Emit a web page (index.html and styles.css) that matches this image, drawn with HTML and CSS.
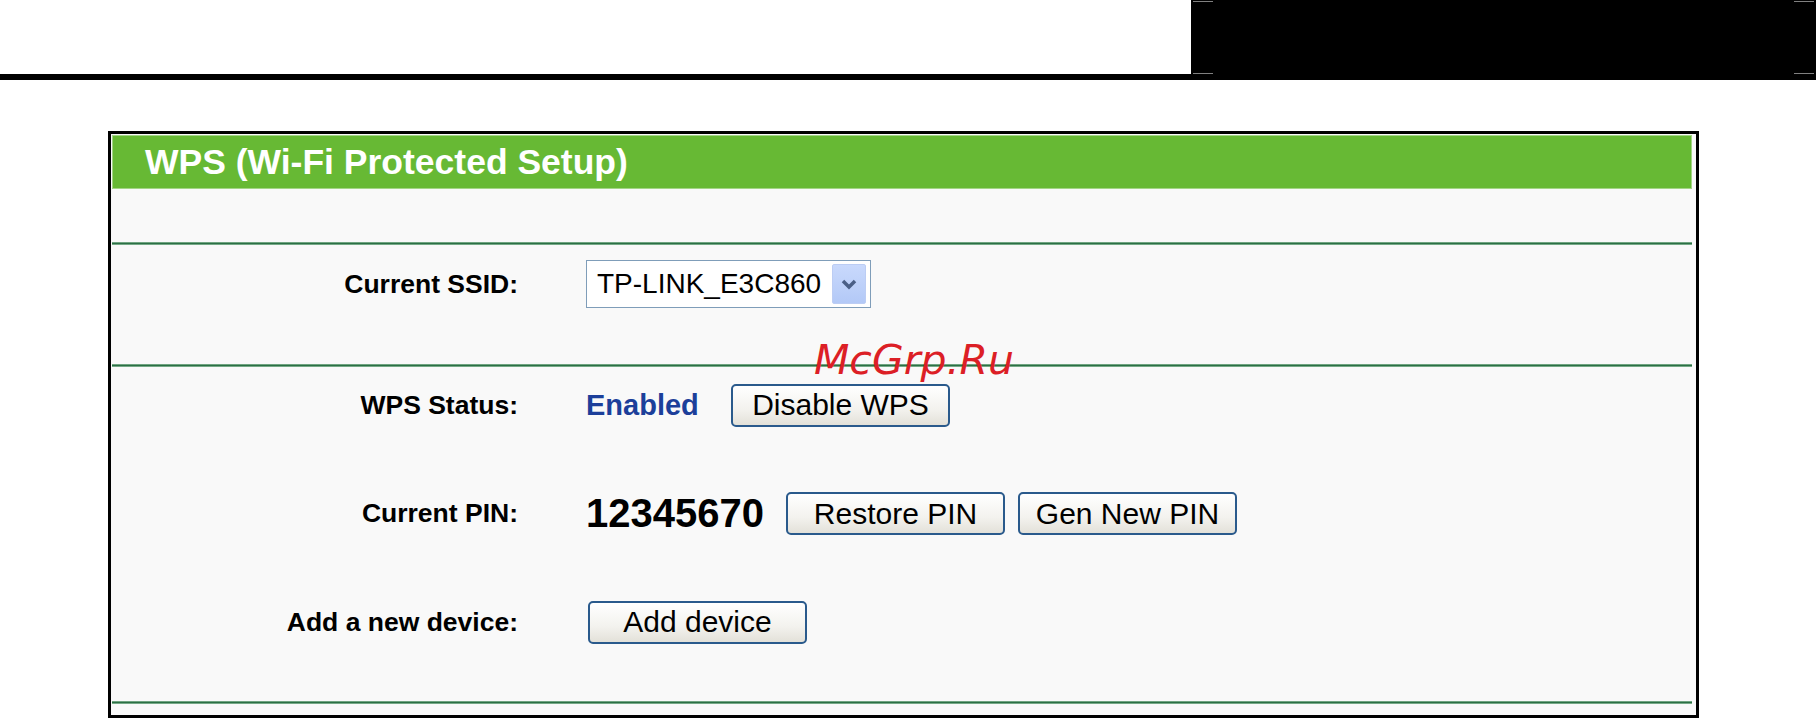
FILE: index.html
```html
<!DOCTYPE html>
<html>
<head>
<meta charset="utf-8">
<title>WPS</title>
<link rel="stylesheet" href="styles.css">
</head>
<body>
<div class="page">
  <div class="topbar">
    <div class="topbar-blank"></div>
    <div class="topbar-box">
      <span class="mark mark-tl"></span>
      <span class="mark mark-tr"></span>
      <span class="mark mark-bl"></span>
      <span class="mark mark-br"></span>
    </div>
  </div>
  <div class="rule"></div>

  <div class="panel">
    <div class="panel-head">WPS (Wi-Fi Protected Setup)</div>
    <div class="spacer"></div>
    <div class="line"></div>
    <div class="ssid-section">
      <div class="row">
        <div class="label">Current SSID:</div>
        <div class="value">
          <div class="select">
            <span class="select-text">TP-LINK_E3C860</span>
            <span class="select-btn">
              <svg width="18" height="14" viewBox="0 0 18 14"><path d="M3 4 L9 10 L15 4" fill="none" stroke="#4a5f86" stroke-width="3.5"/></svg>
            </span>
          </div>
        </div>
      </div>
    </div>
    <div class="line"></div>
    <div class="rows">
      <div class="row">
        <div class="label">WPS Status:</div>
        <div class="value">
          <span class="status">Enabled</span>
          <button class="btn btn-status">Disable WPS</button>
        </div>
      </div>
      <div class="row">
        <div class="label">Current PIN:</div>
        <div class="value">
          <span class="pin">12345670</span>
          <button class="btn btn-pin">Restore PIN</button>
          <button class="btn btn-gen">Gen New PIN</button>
        </div>
      </div>
      <div class="row">
        <div class="label">Add a new device:</div>
        <div class="value">
          <button class="btn btn-add">Add device</button>
        </div>
      </div>
    </div>
    <div class="line"></div>
  </div>

  <div class="watermark">McGrp.Ru</div>
</div>
</body>
</html>
```

FILE: styles.css
```css
html, body {
  margin: 0;
  padding: 0;
  background: #ffffff;
}

.page {
  position: relative;
  width: 1816px;
  height: 719px;
  overflow: hidden;
  font-family: "Liberation Sans", Arial, sans-serif;
}

.topbar {
  display: flex;
  height: 74px;
}

.topbar-blank {
  width: 1191px;
  background: #ffffff;
}

.topbar-box {
  position: relative;
  flex: 1;
  background: #000000;
}

.mark {
  position: absolute;
  width: 20px;
  height: 1px;
  background: #808080;
}
.mark-tl { left: 2px; top: 1px; }
.mark-bl { left: 2px; top: 73px; }
.mark-tr { right: 2px; top: 1px; }
.mark-br { right: 2px; top: 73px; }

.rule {
  height: 6px;
  background: #000000;
}

.panel {
  margin: 51px 0 0 108px;
  width: 1580px;
  border: 3px solid #000000;
  background: #f9f9f9;
  padding: 1px 4px 11px 1px;
}

.panel-head {
  height: 52px;
  display: flex;
  align-items: center;
  padding-left: 32px;
  background: #67b934;
  border: 1px solid #a3d585;
  color: #ffffff;
  font-weight: bold;
  font-size: 35.5px;
}

.spacer {
  height: 53px;
}

.line {
  height: 3px;
  background: linear-gradient(#9fcbab, #2c6f45 40%, #2c6f45 60%, #a9d3b5);
}

.ssid-section {
  height: 119px;
  padding-top: 15px;
  box-sizing: border-box;
}

.rows {
  display: flex;
  flex-direction: column;
  gap: 64px;
  padding: 16px 0 57px;
}

.row {
  display: grid;
  grid-template-columns: 406px 1fr;
  column-gap: 68px;
  align-items: center;
  min-height: 44px;
}

.label {
  text-align: right;
  font-weight: bold;
  font-size: 26.5px;
  color: #000000;
}

.value {
  display: flex;
  align-items: center;
}

.select {
  display: flex;
  align-items: center;
  width: 285px;
  height: 48px;
  box-sizing: border-box;
  border: 1px solid #7f9db9;
  background: #ffffff;
  padding: 0 4px 0 10px;
}

.select-text {
  flex: 1;
  font-size: 28px;
  color: #000000;
}

.select-btn {
  width: 34px;
  height: 40px;
  border-radius: 2px;
  background: linear-gradient(#c9d9fc, #b3c9f7);
  border: 1px solid #bccdf4;
  box-sizing: border-box;
  display: flex;
  align-items: center;
  justify-content: center;
}

.status {
  font-weight: bold;
  font-size: 29px;
  color: #1c3f9a;
  width: 145px;
}

.pin {
  font-weight: bold;
  font-size: 40px;
  color: #000000;
  width: 200px;
}

.btn {
  width: 219px;
  height: 43px;
  box-sizing: border-box;
  border: 2px solid #2a5a8c;
  border-radius: 5px;
  background: linear-gradient(#ffffff, #f3f2ee 60%, #e3e1d9);
  font-family: "Liberation Sans", Arial, sans-serif;
  font-size: 30px;
  color: #000000;
  padding: 0;
}

.btn-gen {
  margin-left: 13px;
}

.btn-add {
  margin-left: 2px;
}

.watermark {
  position: absolute;
  left: 814px;
  top: 340px;
  font-family: "DejaVu Sans", sans-serif;
  font-style: italic;
  font-size: 41px;
  line-height: 40px;
  color: #dc1f26;
}
```
